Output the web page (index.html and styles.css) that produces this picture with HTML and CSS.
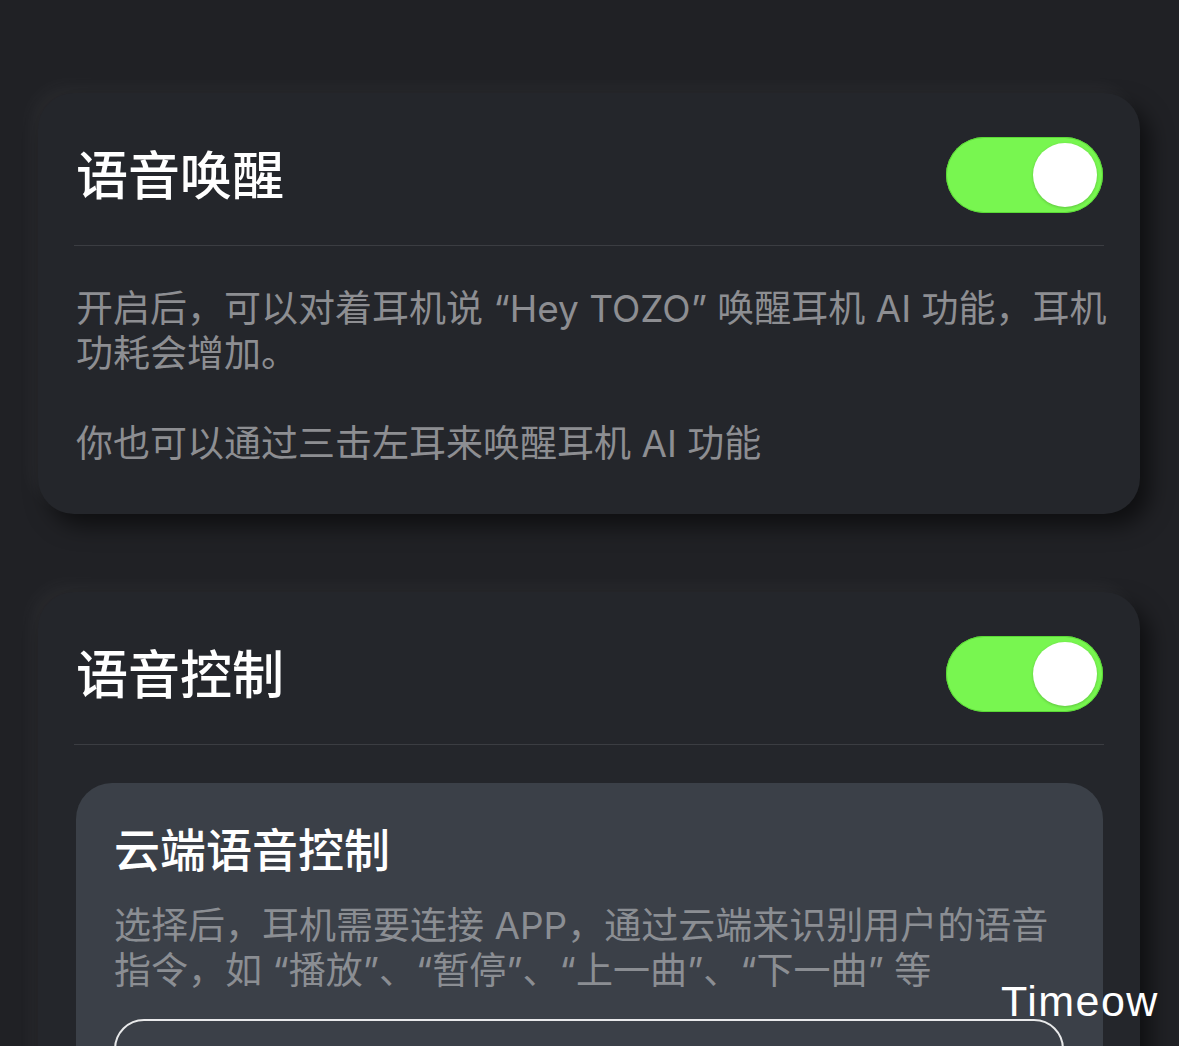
FILE: index.html
```html
<!DOCTYPE html>
<html lang="zh-CN">
<head>
    <meta charset="UTF-8">
    <meta name="viewport" content="width=device-width, initial-scale=1.0">
    <title>语音设置</title>
    <link rel="stylesheet" href="styles.css">
</head>
<body>
    <div class="page">
        <section class="card">
            <div class="card-header">
                <h2 class="card-title">语音唤醒</h2>
                <div class="switch on"><span class="knob"></span></div>
            </div>
            <div class="divider"></div>
            <div class="card-body">
                <p class="desc">开启后，可以对着耳机说 “Hey TOZO” 唤醒耳机 AI 功能，耳机<br>功耗会增加。</p>
                <p class="desc">你也可以通过三击左耳来唤醒耳机 AI 功能</p>
            </div>
        </section>

        <section class="card">
            <div class="card-header">
                <h2 class="card-title">语音控制</h2>
                <div class="switch on"><span class="knob"></span></div>
            </div>
            <div class="divider"></div>
            <div class="option">
                <h3 class="option-title">云端语音控制</h3>
                <p class="option-desc">选择后，耳机需要连接 APP，通过云端来识别用户的语音<br>指令，如 “播放”、“暂停”、“上一曲”、“下一曲” 等</p>
                <div class="option-box"></div>
            </div>
        </section>
    </div>

    <div class="watermark">Timeow</div>
</body>
</html>
```

FILE: styles.css
```css
body {
    margin: 0;
    background-color: #202125;
    font-family: Inter, "Noto Sans CJK SC", sans-serif;
    color: #ffffff;
    overflow: hidden;
}
.page {
    padding: 93px 39px 0 38px;
    display: flex;
    flex-direction: column;
    gap: 78px;
}
.card {
    background-color: #24262b;
    border-radius: 36px;
    padding: 0 37px 0 38px;
    box-shadow: 10px 12px 22px rgba(0, 0, 0, 0.55), -8px -8px 18px rgba(255, 255, 255, 0.04);
}
.card-header {
    display: flex;
    align-items: center;
    justify-content: space-between;
    padding: 44px 0 32px 0;
}
.card-title {
    margin: 0;
    font-size: 52px;
    font-weight: 500;
    line-height: 72px;
    padding-top: 4px;
    color: #ffffff;
}
.switch {
    width: 157px;
    height: 76px;
    border-radius: 38px;
    background-color: #78f650;
    box-shadow: inset 0 0 0 1px #5ad936;
    position: relative;
    box-sizing: border-box;
}
.switch .knob {
    position: absolute;
    top: 6px;
    right: 6px;
    width: 64px;
    height: 64px;
    border-radius: 50%;
    background-color: #ffffff;
    box-shadow: 0 1px 3px rgba(0, 0, 0, 0.2);
}
.divider {
    height: 1px;
    background-color: #3b3d42;
    margin: 0 -1px 0 -2px;
}
.card-body {
    padding: 40px 0 48px 0;
}
.desc {
    margin: 0;
    font-size: 37px;
    line-height: 45px;
    color: #8d8e92;
    white-space: nowrap;
}
.desc + .desc {
    margin-top: 45px;
}
.option {
    margin: 38px 0 0 0;
    background-color: #3b4048;
    border-radius: 36px;
    padding: 37px 39px 0 38px;
    height: 400px;
}
.option-title {
    margin: 0;
    font-size: 46px;
    font-weight: 500;
    line-height: 60px;
    color: #ffffff;
}
.option-desc {
    margin: 23px 0 0 0;
    font-size: 37px;
    line-height: 45px;
    color: #8b8e93;
    white-space: nowrap;
}
.option-box {
    margin-top: 26px;
    height: 120px;
    border: 2px solid #e8e9ea;
    border-radius: 30px;
}
.watermark {
    position: absolute;
    left: 1001px;
    top: 977px;
    font-family: "Liberation Sans", Arial, sans-serif;
    font-size: 43px;
    letter-spacing: 1.5px;
    color: #ffffff;
}
```
